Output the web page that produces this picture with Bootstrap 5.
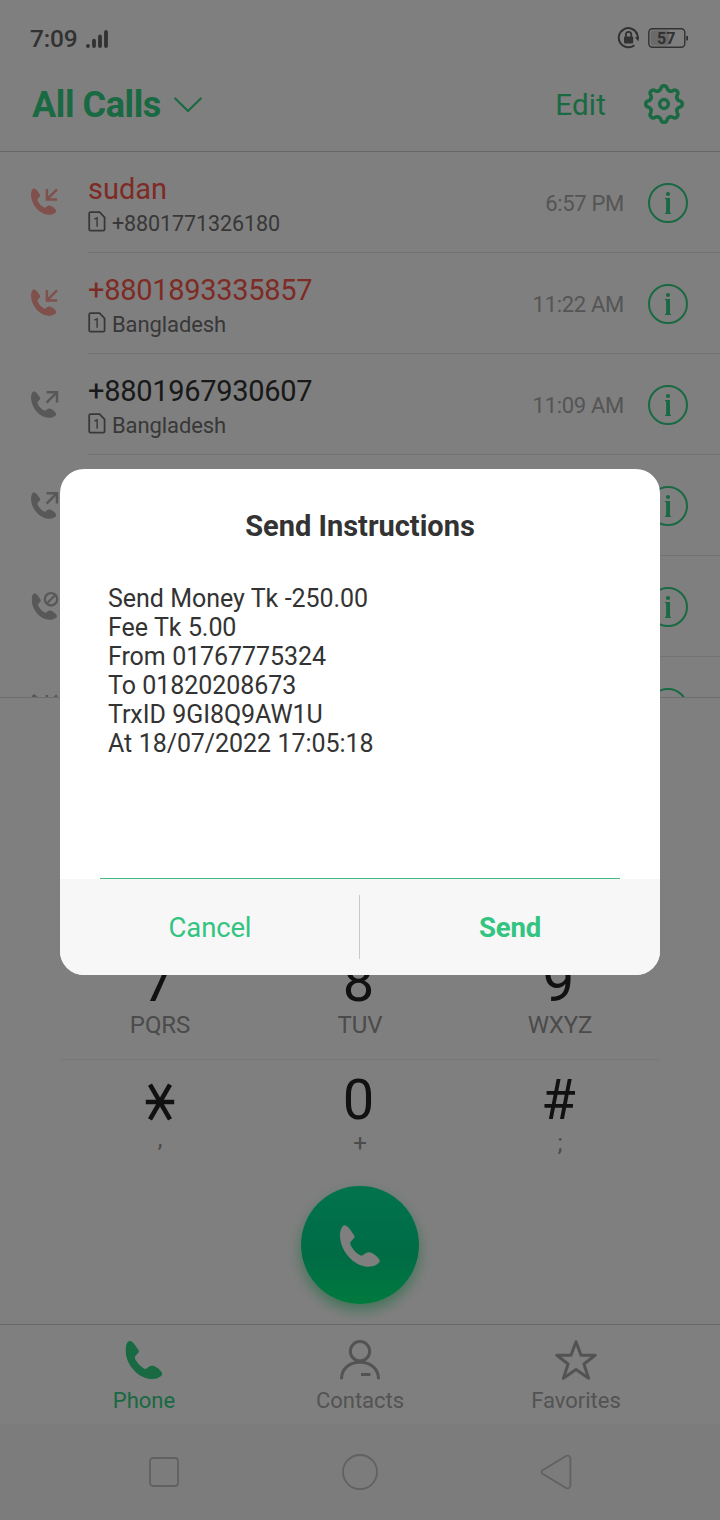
<!DOCTYPE html>
<html lang="en">
<head>
<meta charset="utf-8">
<meta name="viewport" content="width=device-width, initial-scale=1">
<title>Phone</title>
<link href="https://cdn.jsdelivr.net/npm/bootstrap@5.3.0/dist/css/bootstrap.min.css" rel="stylesheet">
<style>
  :root { --green: #33d285; }
  body { font-family: Roboto, "Noto Sans", sans-serif; background: #fff; color: #333; }
  svg { display: block; flex: none; }
  .screen { width: 720px; height: 1520px; overflow: hidden; }
  .green { color: var(--green); }
  .status { height: 76px; padding: 0 32px 0 30px; color: #646464; }
  .clock { font-size: 24.5px; font-weight: 500; line-height: 30px; letter-spacing: -.2px; padding-top: 2px; }
  .top { height: 76px; padding: 0 36px 18px 32px; border-bottom: 1px solid #cdcdcd; }
  .top-title { font-size: 36px; font-weight: 700; line-height: 44px; letter-spacing: -.4px; padding-top: 1px; }
  .top-edit { font-size: 29.5px; line-height: 36px; letter-spacing: .2px; }
  .calls { height: 546px; overflow: hidden; border-bottom: 1px solid #dadada; }
  .call { height: 101px; padding-left: 30px; }
  .call-kind { width: 58px; padding-top: 35px; color: #b0b0b0; }
  .call-main { height: 101px; border-bottom: 1px solid #e6e6e6; padding-right: 32px; }
  .call-side { padding-top: 2px; }
  .call-name { font-size: 29px; line-height: 36px; padding-top: 19px; }
  .call-name.digits { letter-spacing: -.3px; }
  .call-sub { font-size: 22px; line-height: 33px; color: #707070; gap: 6px; letter-spacing: -.1px; }
  .call-num { font-size: 21.5px; }
  .call-time { font-size: 22px; line-height: 30px; color: #aaa; letter-spacing: -.3px; padding-top: 1px; }
  .missed .call-name { color: #fc574c; }
  .missed .call-kind { color: #ffa099; }
  .pad { height: 626px; padding: 8px 60px 0; }
  .pad-row { height: 118px; border-bottom: 1px solid #f0f0f0; }
  .pad-row.last { border: 0; }
  .key { width: 200px; text-align: center; padding-top: 9px; }
  .digit { font-size: 56px; line-height: 62px; height: 62px; color: #222; padding-right: 3px; }
  .letters { font-size: 24px; line-height: 24px; color: #969696; letter-spacing: -.1px; }
  .dial { width: 118px; height: 118px; background: linear-gradient(#00e69a, #00d88c 60%, #00f47c); box-shadow: 0 6px 14px rgba(0,205,95,.5); margin-top: 8px; }
  .tabs { height: 100px; border-top: 1px solid #cdcdcd; padding: 0 35px 0 36px; color: #a6a6a6; }
  .tab-item { width: 216px; padding-top: 15px; }
  .tab-text { font-size: 22px; line-height: 28px; margin-top: 7px; }
  .sysnav { height: 96px; background: #f8f8f8; padding: 0 56px; color: #c2c2c2; }
  .sysnav svg { margin: 0 auto; }
  .shade { background: rgba(0,0,0,.5); width: 720px; height: 1520px; padding: 469px 60px 0; }
  .sheet { width: 600px; height: 506px; border-radius: 24px; background: #fff; overflow: hidden; color: #333; }
  .sheet-title { font-size: 29px; line-height: 36px; font-weight: 700; padding-top: 39px; }
  .sheet-text { margin: 40px 40px 0; padding: 0 8px; height: 295px; font-size: 25px; line-height: 29px; letter-spacing: -.07px; word-spacing: .4px; border-bottom: 1px solid #43bd88; }
  .sheet-foot { height: 96px; background: #f7f7f7; }
  .sheet-btn { width: 299px; font-size: 27.5px; line-height: 36px; color: #33c481; border: 0; background: none; padding: 2px 0 0 1px; letter-spacing: -.15px; }
  .split { width: 1px; height: 64px; background: #c8c8c8; }
</style>
</head>
<body>
<svg width="0" height="0" class="position-absolute">
  <defs>
    <symbol id="handset" viewBox="0 0 121 128" preserveAspectRatio="none">
      <path fill="currentColor" d="M13 1C18 1 24 6 28 11C33 17 37 24 43 32C45 36 44 39 41 41L33 50C30 54 30 58 33 63C40 76 50 86 62 93C66 94 70 92 73 89C78 84 85 82 90 83C100 85 113 96 119 105C122 110 119 116 113 119C104 126 94 127 84 127C40 124 2 80 0 34C0 20 3 6 13 1Z"/>
    </symbol>
    <symbol id="call-in" viewBox="0 0 30 32">
      <use href="#handset" x="1" y="1" width="25.5" height="27"/>
      <path d="M16.9 2V12.4H27.2M16.9 12.4L27 2.3" fill="none" stroke="currentColor" stroke-width="2.5"/>
    </symbol>
    <symbol id="call-out" viewBox="0 0 30 32">
      <use href="#handset" x="1" y="2" width="25.5" height="27"/>
      <path d="M16.6 3.2H27V13.6M27 3.2L16.6 13.6" fill="none" stroke="currentColor" stroke-width="2.5"/>
    </symbol>
    <symbol id="call-block" viewBox="0 0 30 32">
      <use href="#handset" x="1.6" y="2" width="25.5" height="27"/>
      <circle cx="21" cy="8.3" r="6.2" fill="none" stroke="currentColor" stroke-width="2.3"/>
      <path d="M17 12.3L25 4.3" stroke="currentColor" stroke-width="2.2"/>
    </symbol>
    <symbol id="sim" viewBox="0 0 18 21">
      <path d="M2.6 1.2H11.6L16.6 6.4V18.2Q16.6 19.6 15.2 19.6H2.6Q1.2 19.6 1.2 18.2V2.6Q1.2 1.2 2.6 1.2Z" fill="none" stroke="currentColor" stroke-width="1.8"/>
      <path d="M6.4 8.2L9.1 6.9V15.8" fill="none" stroke="currentColor" stroke-width="1.4"/>
    </symbol>
    <symbol id="info" viewBox="0 0 40 40">
      <circle cx="20" cy="20" r="19" fill="none" stroke="currentColor" stroke-width="2"/>
      <circle cx="20" cy="11" r="2.1" fill="currentColor"/>
      <path d="M17 15H22V29.8H23V31H17V29.8H18.1V16.2H17Z" fill="currentColor"/>
    </symbol>
    <path id="tooth" d="M-5.43 -13.1C-3.2 -14 -3.3 -14.8 -3 -16C-2.6 -17.6 -1.5 -18.3 0 -18.3C1.5 -18.3 2.6 -17.6 3 -16C3.3 -14.8 3.2 -14 5.43 -13.1"/>
  </defs>
</svg>

<div class="screen d-flex flex-column">
  <div class="status d-flex align-items-center justify-content-between">
    <div class="d-flex align-items-center">
      <span class="clock">7:09</span>
      <svg class="ms-2 mt-1" width="24" height="20" viewBox="0 0 24 20" stroke="currentColor" stroke-width="3.8" stroke-linecap="round"><path d="M3 15.8V16M9 10.6V16M15 6.4V16M21 2V16"/></svg>
    </div>
    <div class="d-flex align-items-center gap-2">
      <svg width="23" height="22" viewBox="0 0 23 22"><path d="M20.2 7A9.6 9.6 0 1 0 17.4 18.2" fill="none" stroke="currentColor" stroke-width="2"/><path d="M17.9 10.2L22 9.4L21.4 14.6Z" fill="currentColor"/><path d="M19.2 5.5Q21.2 8.5 20.9 12" fill="none" stroke="currentColor" stroke-width="2"/><rect x="7" y="9.6" width="9.2" height="7" rx="1" fill="currentColor"/><path d="M8.9 10V7.6A2.7 2.7 0 0 1 14.3 7.6V10" fill="none" stroke="currentColor" stroke-width="1.8"/></svg>
      <svg width="40" height="20" viewBox="0 0 40 20"><rect x=".8" y=".8" width="36" height="18.4" rx="3.6" fill="none" stroke="currentColor" stroke-width="1.4"/><rect x="2.6" y="2.6" width="18.6" height="14.8" rx="2" fill="#d4d4d4"/><rect x="38.2" y="8" width="1.8" height="4.4" fill="currentColor"/><text x="18.3" y="15.8" text-anchor="middle" font-size="16" font-weight="700" fill="currentColor">57</text></svg>
    </div>
  </div>

  <div class="top d-flex align-items-center justify-content-between green">
    <div class="d-flex align-items-center">
      <span class="top-title">All Calls</span>
      <svg style="margin-left:12px" width="30" height="18" viewBox="0 0 30 18" fill="none" stroke="currentColor" stroke-width="2.1" stroke-linecap="round" stroke-linejoin="round"><path d="M2.2 2.4L15 15L27.8 2.4"/></svg>
    </div>
    <div class="d-flex align-items-center">
      <span class="top-edit">Edit</span>
      <svg style="margin-left:38px" class="mb-1" width="40" height="40" viewBox="-20 -21 40 40" fill="none" stroke="currentColor" stroke-width="3.5" stroke-linecap="round" overflow="visible">
        <use href="#tooth"/><use href="#tooth" transform="rotate(45)"/><use href="#tooth" transform="rotate(90)"/><use href="#tooth" transform="rotate(135)"/><use href="#tooth" transform="rotate(180)"/><use href="#tooth" transform="rotate(225)"/><use href="#tooth" transform="rotate(270)"/><use href="#tooth" transform="rotate(315)"/>
        <circle r="4.4"/>
      </svg>
    </div>
  </div>

  <div class="calls">
    <div class="call missed d-flex">
      <div class="call-kind"><svg width="30" height="32"><use href="#call-in"/></svg></div>
      <div class="call-main flex-grow-1 d-flex">
        <div class="flex-grow-1"><div class="call-name">sudan</div>
          <div class="call-sub d-flex align-items-center"><svg width="18" height="21" class="mb-1"><use href="#sim"/></svg><span class="call-num">+8801771326180</span></div></div>
        <div class="call-side d-flex align-items-center gap-4"><span class="call-time">6:57 PM</span><svg class="green" width="40" height="40"><use href="#info"/></svg></div>
      </div>
    </div>
    <div class="call missed d-flex">
      <div class="call-kind"><svg width="30" height="32"><use href="#call-in"/></svg></div>
      <div class="call-main flex-grow-1 d-flex">
        <div class="flex-grow-1"><div class="call-name digits">+8801893335857</div>
          <div class="call-sub d-flex align-items-center"><svg width="18" height="21" class="mb-1"><use href="#sim"/></svg><span>Bangladesh</span></div></div>
        <div class="call-side d-flex align-items-center gap-4"><span class="call-time">11:22 AM</span><svg class="green" width="40" height="40"><use href="#info"/></svg></div>
      </div>
    </div>
    <div class="call d-flex">
      <div class="call-kind"><svg width="30" height="32"><use href="#call-out"/></svg></div>
      <div class="call-main flex-grow-1 d-flex">
        <div class="flex-grow-1"><div class="call-name digits">+8801967930607</div>
          <div class="call-sub d-flex align-items-center"><svg width="18" height="21" class="mb-1"><use href="#sim"/></svg><span>Bangladesh</span></div></div>
        <div class="call-side d-flex align-items-center gap-4"><span class="call-time">11:09 AM</span><svg class="green" width="40" height="40"><use href="#info"/></svg></div>
      </div>
    </div>
    <div class="call d-flex">
      <div class="call-kind"><svg width="30" height="32"><use href="#call-out"/></svg></div>
      <div class="call-main call-side flex-grow-1 d-flex align-items-center justify-content-end"><svg class="green" width="40" height="40"><use href="#info"/></svg></div>
    </div>
    <div class="call d-flex">
      <div class="call-kind"><svg width="30" height="32"><use href="#call-block"/></svg></div>
      <div class="call-main call-side flex-grow-1 d-flex align-items-center justify-content-end"><svg class="green" width="40" height="40"><use href="#info"/></svg></div>
    </div>
    <div class="call d-flex">
      <div class="call-kind pt-4 mt-3"><svg style="margin-top:-4px" width="30" height="32"><use href="#call-in"/></svg></div>
      <div class="call-main call-side flex-grow-1 d-flex align-items-center justify-content-end"><svg class="green" width="40" height="40"><use href="#info"/></svg></div>
    </div>
  </div>

  <div class="pad">
    <div class="pad-row"></div>
    <div class="pad-row"></div>
    <div class="pad-row d-flex">
      <div class="key"><div class="digit">7</div><div class="letters">PQRS</div></div>
      <div class="key"><div class="digit">8</div><div class="letters">TUV</div></div>
      <div class="key"><div class="digit">9</div><div class="letters">WXYZ</div></div>
    </div>
    <div class="pad-row last d-flex">
      <div class="key"><div class="digit d-flex justify-content-center pe-0"><svg style="margin-top:14px" width="30" height="38" viewBox="0 0 30 38" fill="none" stroke="currentColor" stroke-width="4.6"><path d="M.8 19H29.2M5 1.6L25 36.4M25 1.6L5 36.4"/></svg></div><div class="letters" style="margin-top:-4px">,</div></div>
      <div class="key"><div class="digit">0</div><div class="letters">+</div></div>
      <div class="key"><div class="digit">#</div><div class="letters">;</div></div>
    </div>
    <div class="dial rounded-circle mx-auto d-flex align-items-center justify-content-center"><svg width="40" height="42" class="text-white" style="margin-top:2px"><use href="#handset"/></svg></div>
  </div>

  <div class="tabs d-flex">
    <div class="tab-item d-flex flex-column align-items-center green"><svg width="38" height="40" viewBox="0 0 38 40"><use href="#handset" x=".5" y=".5" width="37" height="39"/></svg><span class="tab-text">Phone</span></div>
    <div class="tab-item d-flex flex-column align-items-center"><svg width="42" height="40" viewBox="0 0 42 40" fill="none" stroke="currentColor" stroke-width="3"><circle cx="21" cy="11.3" r="9.7"/><path d="M2.5 39.3C2.5 29 10 22.3 21 22.3S39.5 29 39.5 39.3M22 34.4H31.5"/></svg><span class="tab-text">Contacts</span></div>
    <div class="tab-item d-flex flex-column align-items-center"><svg width="42" height="40" viewBox="0 0 42 40" fill="none" stroke="currentColor" stroke-width="3" stroke-linejoin="round"><path d="M21 1.7L26 15.3H40.2L28.9 24L33.6 38.3L21 29.6L8.4 38.3L13.1 24L1.8 15.3H16Z"/></svg><span class="tab-text">Favorites</span></div>
  </div>
  <div class="sysnav d-flex align-items-center">
    <div style="width:216px"><svg width="30" height="30" viewBox="0 0 30 30" fill="none" stroke="currentColor" stroke-width="1.8"><rect x="1" y="1" width="28" height="28" rx="3"/></svg></div>
    <div style="width:176px"><svg width="36" height="36" viewBox="0 0 36 36" fill="none" stroke="currentColor" stroke-width="1.8"><circle cx="18" cy="18" r="17"/></svg></div>
    <div style="width:216px"><svg width="32" height="36" viewBox="0 0 32 36" fill="none" stroke="currentColor" stroke-width="1.8"><path d="M2.6 16.2L25.6 2.2Q30.4 .4 30.4 5V31Q30.4 35.6 25.6 33.8L2.6 19.8Q.4 18 2.6 16.2Z"/></svg></div>
  </div>
</div>

<div class="shade position-absolute top-0 start-0">
  <div class="sheet">
    <div class="sheet-title text-center">Send Instructions</div>
    <div class="sheet-text">Send Money Tk -250.00<br>Fee Tk 5.00<br>From 01767775324<br>To 01820208673<br>TrxID 9GI8Q9AW1U<br>At 18/07/2022 17:05:18</div>
    <div class="sheet-foot d-flex align-items-center">
      <button class="sheet-btn">Cancel</button><div class="split"></div><button class="sheet-btn fw-bold">Send</button>
    </div>
  </div>
</div>
<script src="https://cdn.jsdelivr.net/npm/bootstrap@5.3.0/dist/js/bootstrap.bundle.min.js"></script>
</body>
</html>
